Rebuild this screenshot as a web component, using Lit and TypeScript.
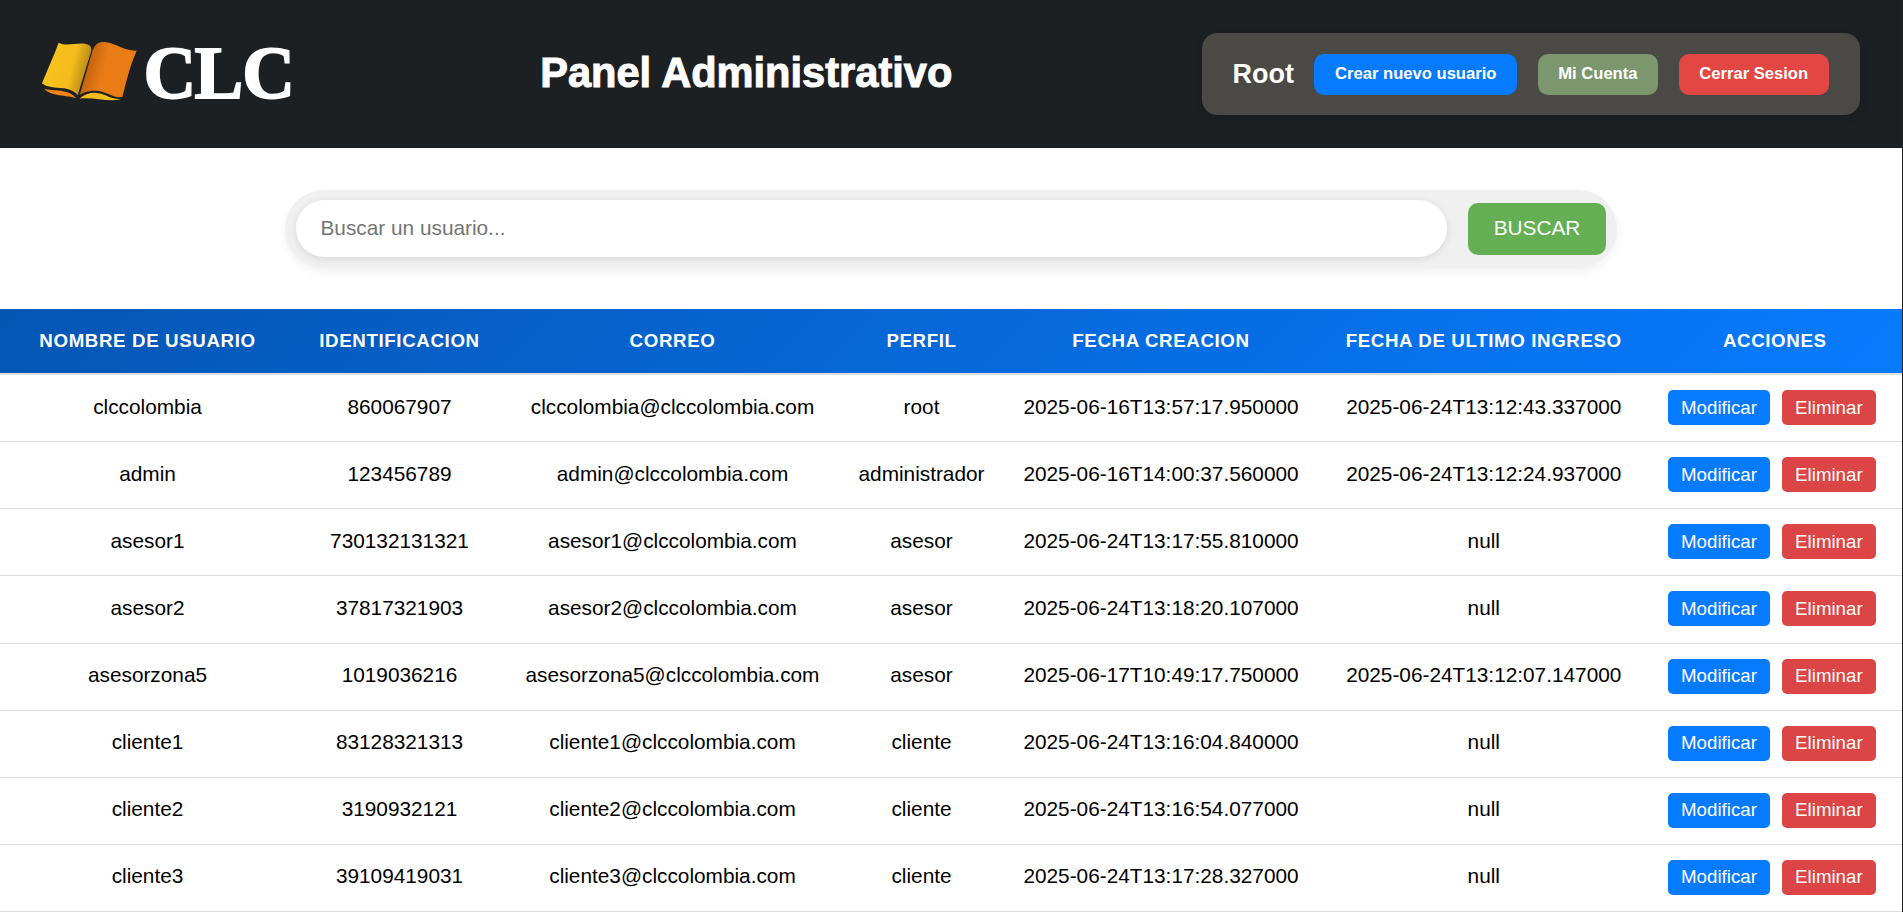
import { LitElement, html, css } from "lit";
import { customElement, state } from "lit/decorators.js";

interface Usuario {
  nombre: string;
  id: string;
  correo: string;
  perfil: string;
  creacion: string;
  ingreso: string;
}

const u = (nombre: string, id: string, perfil: string, creacion: string, ingreso = "null"): Usuario => ({
  nombre, id, perfil, creacion, ingreso, correo: `${nombre}@clccolombia.com`,
});

@customElement("clc-logo")
class ClcLogo extends LitElement {
  static styles = css`
    :host { display: block; width: 270px; height: 96px; }
    svg { display: block; width: 270px; height: 96px; overflow: visible; }
    .word {
      font: bold 73px "Liberation Serif", "Times New Roman", serif;
      fill: #fff; stroke: #fff; stroke-width: 1.8px;
    }
  `;
  render() {
    return html`
      <svg viewBox="0 0 270 96" aria-label="CLC">
        <defs>
          <linearGradient id="y" x1="0.15" y1="0.4" x2="0.9" y2="0.6">
            <stop offset="0" stop-color="#f8c21c" /><stop offset="0.6" stop-color="#f4bb1d" />
            <stop offset="1" stop-color="#b58a16" />
          </linearGradient>
          <linearGradient id="o" x1="0.12" y1="0.4" x2="0.9" y2="0.6">
            <stop offset="0" stop-color="#c2610f" /><stop offset="0.4" stop-color="#ea7c16" />
            <stop offset="1" stop-color="#ea7c16" />
          </linearGradient>
        </defs>
        <g transform="translate(-20 -6) scale(.33333)">
          <path fill="url(#y)" d="M116 68C140 82 181 63 205 74C214 78 216 87 212 99L173 226C162 211 144 205 120 204C94 203 76 199 66 190C82 149 101 109 116 68Z" />
          <path fill="url(#o)" d="M179 225L218 91C226 71 239 64 259 67C290 72 316 94 350 92C330 137 319 184 307 231C277 235 260 213 228 212C205 211 189 218 179 225Z" />
          <path fill="#ee821a" d="M73 206C100 214 147 205 169 235C142 224 91 230 73 206Z" />
          <path fill="#f4bb1d" d="M178 236C194 223 211 217 231 219C258 222 274 239 303 237C270 248 215 229 178 236Z" />
        </g>
        <text class="word" y="71.8" x="103.6 154.5 202.3">CLC</text>
      </svg>`;
  }
}

@customElement("app-root")
class AppRoot extends LitElement {
  static styles = css`
    :host {
      display: block; box-sizing: border-box; height: 912px; overflow: hidden;
      background: #fff; border-right: 1px solid #1e2124; color: #000;
      font: 20.8px/1.15 "Liberation Sans", Arial, sans-serif;
    }
    * { box-sizing: border-box; }
    button { border: 0; margin: 0; padding: 0; color: #fff; font-family: inherit; white-space: nowrap; }
    header {
      height: 148px; background: #1d2023; display: flex; align-items: center;
      justify-content: space-between; padding: 0 42px 0 40px; box-shadow: inset 0 -1px #1b171c;
    }
    h1 { margin: 0 19px 3px 0; font-size: 41.6px; line-height: 48px; color: #fff; -webkit-text-stroke: 1px #fff; }
    .panel {
      height: 82px; display: flex; align-items: center; gap: 20.4px; padding: 1px 31.2px 0 31px;
      border-radius: 15.6px; background: #4b4946; box-shadow: 0 4px 10px rgba(0, 0, 0, .1);
    }
    .who { color: #fff; font-weight: bold; font-size: 27px; }
    .act { height: 41px; padding: 0 20.7px 2px; border-radius: 10px; font-size: 16.6px; font-weight: bold; }
    .blue { background: #077bff; }
    .green { background: #7c976d; }
    .red { background: #e34744; }
    .search {
      width: 1332px; height: 78px; margin: 42px 0 41px 285px; padding: 0 11px 1px;
      display: flex; align-items: center; gap: 21px; border-radius: 39px;
      background: #f0f0f0; box-shadow: 0 4px 10px rgba(0, 0, 0, .06);
    }
    .search input {
      flex: 1; height: 57px; border: 0; border-radius: 29px; padding: 0 24.5px 2px; outline: 0;
      font: inherit; background: #fff; box-shadow: 0 2px 8px rgba(0, 0, 0, .1);
    }
    .search input::placeholder { color: #757575; }
    .find { width: 138px; height: 52px; padding-bottom: 2px; border-radius: 10px; background: #64af53; font-size: 20.8px; }
    .row {
      display: grid; grid-template-columns: 295px 209px 337px 161px 318px 327.5px 1fr;
      height: 67.14px; align-items: center; justify-items: center; border-bottom: 1px solid #ddd;
    }
    .row > span { padding-bottom: 3px; }
    .row.head > span { padding: 0; }
    .head {
      height: 66px; background: linear-gradient(135deg, #0556b3, #077bff) padding-box;
      border-bottom: 2px solid #dedede; color: #fff; font-size: 18.72px; font-weight: bold;
      letter-spacing: .62px;
    }
    .ops { display: flex; gap: 12px; margin-left: -6px; padding-bottom: 1px; }
    .op { height: 35px; padding: 0 13px; border-radius: 5px; font-size: 18.72px; }
    .mod { padding: 0 13.2px; }
    .del { background: #dc4545; }
  `;

  @state() private usuarios: Usuario[] = [
    u("clccolombia", "860067907", "root", "2025-06-16T13:57:17.950000", "2025-06-24T13:12:43.337000"),
    u("admin", "123456789", "administrador", "2025-06-16T14:00:37.560000", "2025-06-24T13:12:24.937000"),
    u("asesor1", "730132131321", "asesor", "2025-06-24T13:17:55.810000"),
    u("asesor2", "37817321903", "asesor", "2025-06-24T13:18:20.107000"),
    u("asesorzona5", "1019036216", "asesor", "2025-06-17T10:49:17.750000", "2025-06-24T13:12:07.147000"),
    u("cliente1", "83128321313", "cliente", "2025-06-24T13:16:04.840000"),
    u("cliente2", "3190932121", "cliente", "2025-06-24T13:16:54.077000"),
    u("cliente3", "39109419031", "cliente", "2025-06-24T13:17:28.327000"),
  ];

  render() {
    const titulos = ["NOMBRE DE USUARIO", "IDENTIFICACION", "CORREO", "PERFIL", "FECHA CREACION", "FECHA DE ULTIMO INGRESO", "ACCIONES"];
    return html`
      <header>
        <clc-logo></clc-logo>
        <h1>Panel Administrativo</h1>
        <div class="panel">
          <span class="who">Root</span>
          <button class="act blue">Crear nuevo usuario</button>
          <button class="act green">Mi Cuenta</button>
          <button class="act red">Cerrar Sesion</button>
        </div>
      </header>
      <form class="search" @submit=${(e: Event) => e.preventDefault()}>
        <input placeholder="Buscar un usuario..." />
        <button class="find">BUSCAR</button>
      </form>
      <div class="row head">${titulos.map((t) => html`<span>${t}</span>`)}</div>
      ${this.usuarios.map((x) => html`
        <div class="row">
          <span>${x.nombre}</span><span>${x.id}</span><span>${x.correo}</span><span>${x.perfil}</span>
          <span>${x.creacion}</span><span>${x.ingreso}</span>
          <div class="ops"><button class="op mod blue">Modificar</button><button class="op del">Eliminar</button></div>
        </div>`)}
    `;
  }
}
